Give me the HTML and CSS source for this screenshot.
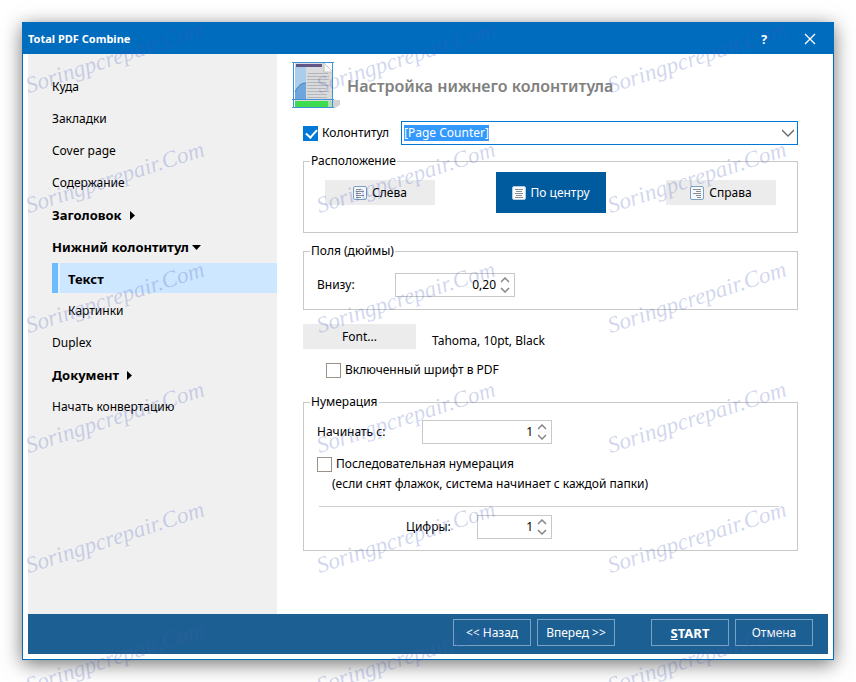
FILE: index.html
```html
<!DOCTYPE html>
<html lang="ru">
<head>
<meta charset="utf-8">
<title>Total PDF Combine</title>
<link rel="stylesheet" href="styles.css">
</head>
<body>
<svg class="defs" width="0" height="0" aria-hidden="true">
  <symbol id="up" viewBox="0 0 10 6"><path d="M1 5l4-4 4 4" fill="none" stroke="#868686" stroke-width="1.5"/></symbol>
  <symbol id="down" viewBox="0 0 10 6"><path d="M1 1l4 4 4-4" fill="none" stroke="#868686" stroke-width="1.5"/></symbol>
</svg>
<div class="window">
  <header class="titlebar">
    <span class="titlebar-text">Total PDF Combine</span>
    <button class="title-btn help" type="button">?</button>
    <button class="title-btn" type="button" aria-label="Закрыть">
      <svg width="12" height="12" viewBox="0 0 12 12"><path d="M1 1l10 10M11 1L1 11" stroke="#fff" stroke-width="1.3"/></svg>
    </button>
  </header>
  <div class="main">
    <nav class="sidebar">
      <a href="#">Куда</a>
      <a href="#">Закладки</a>
      <a href="#">Cover page</a>
      <a href="#">Содержание</a>
      <a href="#" class="group">Заголовок <svg width="5" height="9" viewBox="0 0 5 9"><path d="M0 0l5 4.500L0 9z"/></svg></a>
      <a href="#" class="group open">Нижний колонтитул <svg width="9" height="5" viewBox="0 0 9 5"><path d="M0 0h9L4.500 5z"/></svg></a>
      <a href="#" class="sub current">Текст</a>
      <a href="#" class="sub">Картинки</a>
      <a href="#">Duplex</a>
      <a href="#" class="group">Документ <svg width="5" height="9" viewBox="0 0 5 9"><path d="M0 0l5 4.500L0 9z"/></svg></a>
      <a href="#">Начать конвертацию</a>
    </nav>
    <form class="content">
      <div class="heading">
        <svg width="48" height="50" viewBox="0 0 48 50" aria-hidden="true">
          <path d="M38 39h10v5l-5 3h-6z" fill="#d2d2d2"/>
          <path d="M3 2h29l9 9v36H3z" fill="#d9dadb"/>
          <path d="M32 2l9 9h-9z" fill="#f7f7f7" stroke="#aaa" stroke-width=".6"/>
          <path d="M3 5h11v34H3z" fill="#a9cdeb"/>
          <path d="M3 31c3-6 6-9 11-9v17H3z" fill="#6da5dc"/>
          <path d="M3 31c3-6 6-9 11-9" fill="none" stroke="#3f80c5"/>
          <path d="M4 3h26v3H4z" fill="#625689"/>
          <path d="M16 12.500h20M15 15.500h22M15 18.500h22M15 21.500h19M15 24.500h22M15 27.500h19M15 30.500h22M15 33.500h20M15 36.500h20" stroke="#b4b6b9"/>
          <path d="M3 40h33v6H3z" fill="#3ddb50"/>
          <path d="M36 40h4v6h-4z" fill="#aedbb8"/>
          <path d="M1.500 1v46M40.500 1v46M0 1.500h42M0 38.500h42M0 46.500h42" stroke="#3f92d8" fill="none"/>
        </svg>
        <h1>Настройка нижнего колонтитула</h1>
      </div>

      <div class="row source">
        <input type="checkbox" id="use" checked><label for="use">Колонтитул</label>
        <div class="combo">
          <input type="text" id="combo" value="[Page Counter]" aria-label="Текст колонтитула">
          <button type="button" aria-label="Открыть список"><svg width="12" height="8" viewBox="0 0 12 8"><path d="M0 1l6 6 6-6" fill="none" stroke="#6b6b6b" stroke-width="1.4"/></svg></button>
        </div>
      </div>

      <fieldset class="placement">
        <legend>Расположение</legend>
        <div class="align-row">
          <button type="button" class="flat">
            <svg width="14" height="14" viewBox="0 0 14 14"><rect x=".5" y=".5" width="13" height="13" rx="1.500" fill="#f4faff" stroke="#7d9fc2"/><path d="M3 3.500h5M3 5.500h8M3 7.500h5M3 9.500h8M3 11.500h5" stroke="#8d8d8d"/></svg>Слева</button>
          <button type="button" class="flat chosen">
            <svg width="14" height="14" viewBox="0 0 14 14"><rect x=".5" y=".5" width="13" height="13" rx="1.500" fill="#f8fcff" stroke="#b5cde5"/><path d="M3 3.500h8M4 5.500h6M3 7.500h8M4 9.500h6M3 11.500h8" stroke="#8d8d8d"/></svg>По центру</button>
          <button type="button" class="flat">
            <svg width="14" height="14" viewBox="0 0 14 14"><rect x=".5" y=".5" width="13" height="13" rx="1.500" fill="#f4faff" stroke="#7d9fc2"/><path d="M3 3.500h8M6 5.500h5M3 7.500h8M6 9.500h5M7 11.500h4" stroke="#8d8d8d"/></svg>Справа</button>
        </div>
      </fieldset>

      <fieldset class="margins">
        <legend>Поля (дюймы)</legend>
        <div class="row">
          <label class="lead" for="bottom">Внизу:</label>
          <div class="spin"><input type="text" id="bottom" value="0,20"><span><button type="button" aria-label="Больше"><svg width="10" height="6"><use href="#up"/></svg></button><button type="button" aria-label="Меньше"><svg width="10" height="6"><use href="#down"/></svg></button></span></div>
        </div>
      </fieldset>

      <div class="font-row">
        <button type="button" class="flat font-btn">Font...</button>
        <span>Tahoma, 10pt, Black</span>
      </div>
      <div class="row embed"><input type="checkbox" id="embed"><label for="embed">Включенный шрифт в PDF</label></div>

      <fieldset class="numbering">
        <legend>Нумерация</legend>
        <div class="row">
          <label class="lead wide" for="start">Начинать с:</label>
          <div class="spin mid"><input type="text" id="start" value="1"><span><button type="button" aria-label="Больше"><svg width="10" height="6"><use href="#up"/></svg></button><button type="button" aria-label="Меньше"><svg width="10" height="6"><use href="#down"/></svg></button></span></div>
        </div>
        <div class="row seq"><input type="checkbox" id="seq"><label for="seq">Последовательная нумерация</label></div>
        <p class="hint">(если снят флажок, система начинает с каждой папки)</p>
        <hr>
        <div class="row digits">
          <label for="digits">Цифры:</label>
          <div class="spin small"><input type="text" id="digits" value="1"><span><button type="button" aria-label="Больше"><svg width="10" height="6"><use href="#up"/></svg></button><button type="button" aria-label="Меньше"><svg width="10" height="6"><use href="#down"/></svg></button></span></div>
        </div>
      </fieldset>
    </form>
  </div>
  <footer class="actions">
    <button type="button">&lt;&lt; Назад</button>
    <button type="button">Вперед &gt;&gt;</button>
    <button type="button" class="start"><u>S</u>TART</button>
    <button type="button">Отмена</button>
  </footer>
</div>
<div class="watermarks" aria-hidden="true">
  <span>Soringpcrepair.Com</span><span>Soringpcrepair.Com</span><span>Soringpcrepair.Com</span>
  <span>Soringpcrepair.Com</span><span>Soringpcrepair.Com</span><span>Soringpcrepair.Com</span>
  <span>Soringpcrepair.Com</span><span>Soringpcrepair.Com</span><span>Soringpcrepair.Com</span>
  <span>Soringpcrepair.Com</span><span>Soringpcrepair.Com</span><span>Soringpcrepair.Com</span>
  <span>Soringpcrepair.Com</span><span>Soringpcrepair.Com</span><span>Soringpcrepair.Com</span>
  <span>Soringpcrepair.Com</span><span>Soringpcrepair.Com</span><span>Soringpcrepair.Com</span>
</div>
<script src="script.js"></script>
</body>
</html>
```
FILE: styles.css
```css
* { box-sizing: border-box; }
body {
  margin: 0;
  min-height: 100vh;
  padding: 22px;
  display: flex;
  position: relative;
  overflow: hidden;
  background: #fff;
  color: #000;
  font: 12px/16px "Noto Sans", sans-serif;
}
.defs { position: absolute; }
button, input { font: inherit; color: inherit; }
button { border: 0; padding: 0; background: none; }
svg { display: block; }

.window {
  flex: 1;
  display: flex;
  flex-direction: column;
  background: #fff;
  border: 1px solid #006cbe;
  box-shadow: 0 4px 18px rgba(0, 0, 0, .55);
}
.titlebar {
  display: flex;
  align-items: center;
  height: 31px;
  padding: 0 0 0 5px;
  background: #006cbe;
  color: #fff;
  font-weight: bold;
  font-size: 11px;
}
.titlebar-text { flex: 1; }
.title-btn {
  width: 46px;
  height: 31px;
  display: flex;
  align-items: center;
  justify-content: center;
}
.help { font-size: 13px; }

.main { flex: 1; display: flex; padding: 0 5px; }
.sidebar {
  width: 249px;
  padding: 17px 0 0 24px;
  background: #f0f0f0;
}
.sidebar a {
  display: flex;
  align-items: center;
  gap: 8px;
  height: 30px;
  margin-bottom: 2px;
  padding-top: 2px;
  color: #000;
  text-decoration: none;
}
.sidebar .group, .sidebar .current { font-weight: bold; font-size: 13px; }
.sidebar .open { gap: 3px; }
.sidebar .sub { padding-left: 16px; }
.sidebar .current {
  padding-left: 10px;
  background: #cce7ff;
  border-left: 6px solid #6cbcff;
  box-shadow: inset 2px 0 #e2f2ff;
}

.content { flex: 1; padding: 7px 30px 0 26px; }
.heading {
  display: flex;
  align-items: center;
  gap: 7px;
  margin-left: -11px;
  height: 50px;
}
.heading h1 {
  margin: 0;
  color: #808080;
  font: 600 16px/24px "Noto Sans", sans-serif;
}
.row { display: flex; align-items: center; }
input[type="checkbox"] {
  appearance: none;
  width: 15px;
  height: 15px;
  margin: 0 4px 0 0;
  border: 1px solid #9a9189;
  background: #fff;
}
input[type="checkbox"]:checked {
  border-color: #0078d7;
  background: #0078d7;
  position: relative;
}
input[type="checkbox"]:checked::after {
  content: "";
  position: absolute;
  left: 4px;
  top: 0;
  width: 5px;
  height: 9px;
  border: solid #fff;
  border-width: 0 2px 2px 0;
  transform: rotate(42deg);
}
.source { margin-top: 10px; }
.source label { width: 79px; }
.combo {
  flex: 1;
  display: flex;
  align-items: center;
  height: 24px;
  padding-left: 2px;
  border: 1px solid #0078d7;
  background: #fff;
}
.combo input {
  flex: 1;
  min-width: 0;
  padding: 0;
  border: 0;
  outline: 0;
}
.combo input::selection { background: #3399ff; color: #fff; }
.combo button { padding: 0 3px; }

fieldset {
  margin: 0;
  min-width: 0;
  border: 1px solid #c8c8c8;
}
legend { padding: 0 1px; }
.placement { margin-top: 8px; padding: 3px 21px 19px; }
.align-row { display: flex; align-items: center; justify-content: space-between; }
.flat {
  width: 110px;
  height: 25px;
  display: flex;
  align-items: center;
  justify-content: center;
  gap: 5px;
  background: #ececec;
}
.chosen { height: 41px; background: #005a9e; color: #fff; }

.margins { margin-top: 10px; padding: 14px 13px 12px; }
.margins legend, .numbering legend { margin-left: -7px; }
.placement legend { margin-left: -15px; }
.lead { width: 78px; }
.wide { width: 105px; }
.spin {
  display: flex;
  width: 120px;
  height: 24px;
  border: 1px solid #c8c8c8;
  background: #fff;
}
.mid { width: 130px; }
.small { width: 75px; }
.spin input {
  flex: 1;
  min-width: 0;
  padding: 0 4px 0 0;
  border: 0;
  text-align: right;
}
.spin span {
  display: flex;
  flex-direction: column;
  justify-content: center;
  gap: 4px;
  padding: 0 4px 0 0;
}

.font-row { display: flex; align-items: flex-end; gap: 16px; margin-top: 14px; }
.font-btn { width: 113px; }
.embed { margin: 13px 0 0 23px; }

.numbering { margin-top: 16px; padding: 10px 13px 11px; }
.seq { margin-top: 12px; }
.hint { margin: 4px 0 0 15px; }
hr {
  height: 1px;
  margin: 14px 5px 8px 2px;
  border: 0;
  background: #d0d0d0;
}
.digits label { width: 71px; margin-left: 89px; }

.actions {
  display: flex;
  gap: 6px;
  justify-content: flex-end;
  align-items: flex-start;
  height: 40px;
  margin: 0 5px 5px;
  padding: 5px 15px 0;
  background: #1c6093;
  color: #fff;
}
.actions button { width: 78px; height: 27px; border: 1px solid #7ba2c5; }
.actions .start { margin-left: 30px; font-weight: bold; font-size: 13px; }

.watermarks {
  position: absolute;
  inset: 0;
  padding-left: 30px;
  overflow: hidden;
  pointer-events: none;
  display: grid;
  grid-template-columns: repeat(3, 291px);
  grid-template-rows: 98px repeat(5, 120px);
  align-items: end;
  justify-items: start;
}
.watermarks span {
  transform: rotate(-18deg);
  transform-origin: left bottom;
  color: rgba(70, 90, 190, .25);
  font: italic 23px/24px "Liberation Serif", serif;
  white-space: nowrap;
}
```
FILE: script.js
```js
const combo = document.getElementById("combo");
combo.focus();
combo.select();
```
